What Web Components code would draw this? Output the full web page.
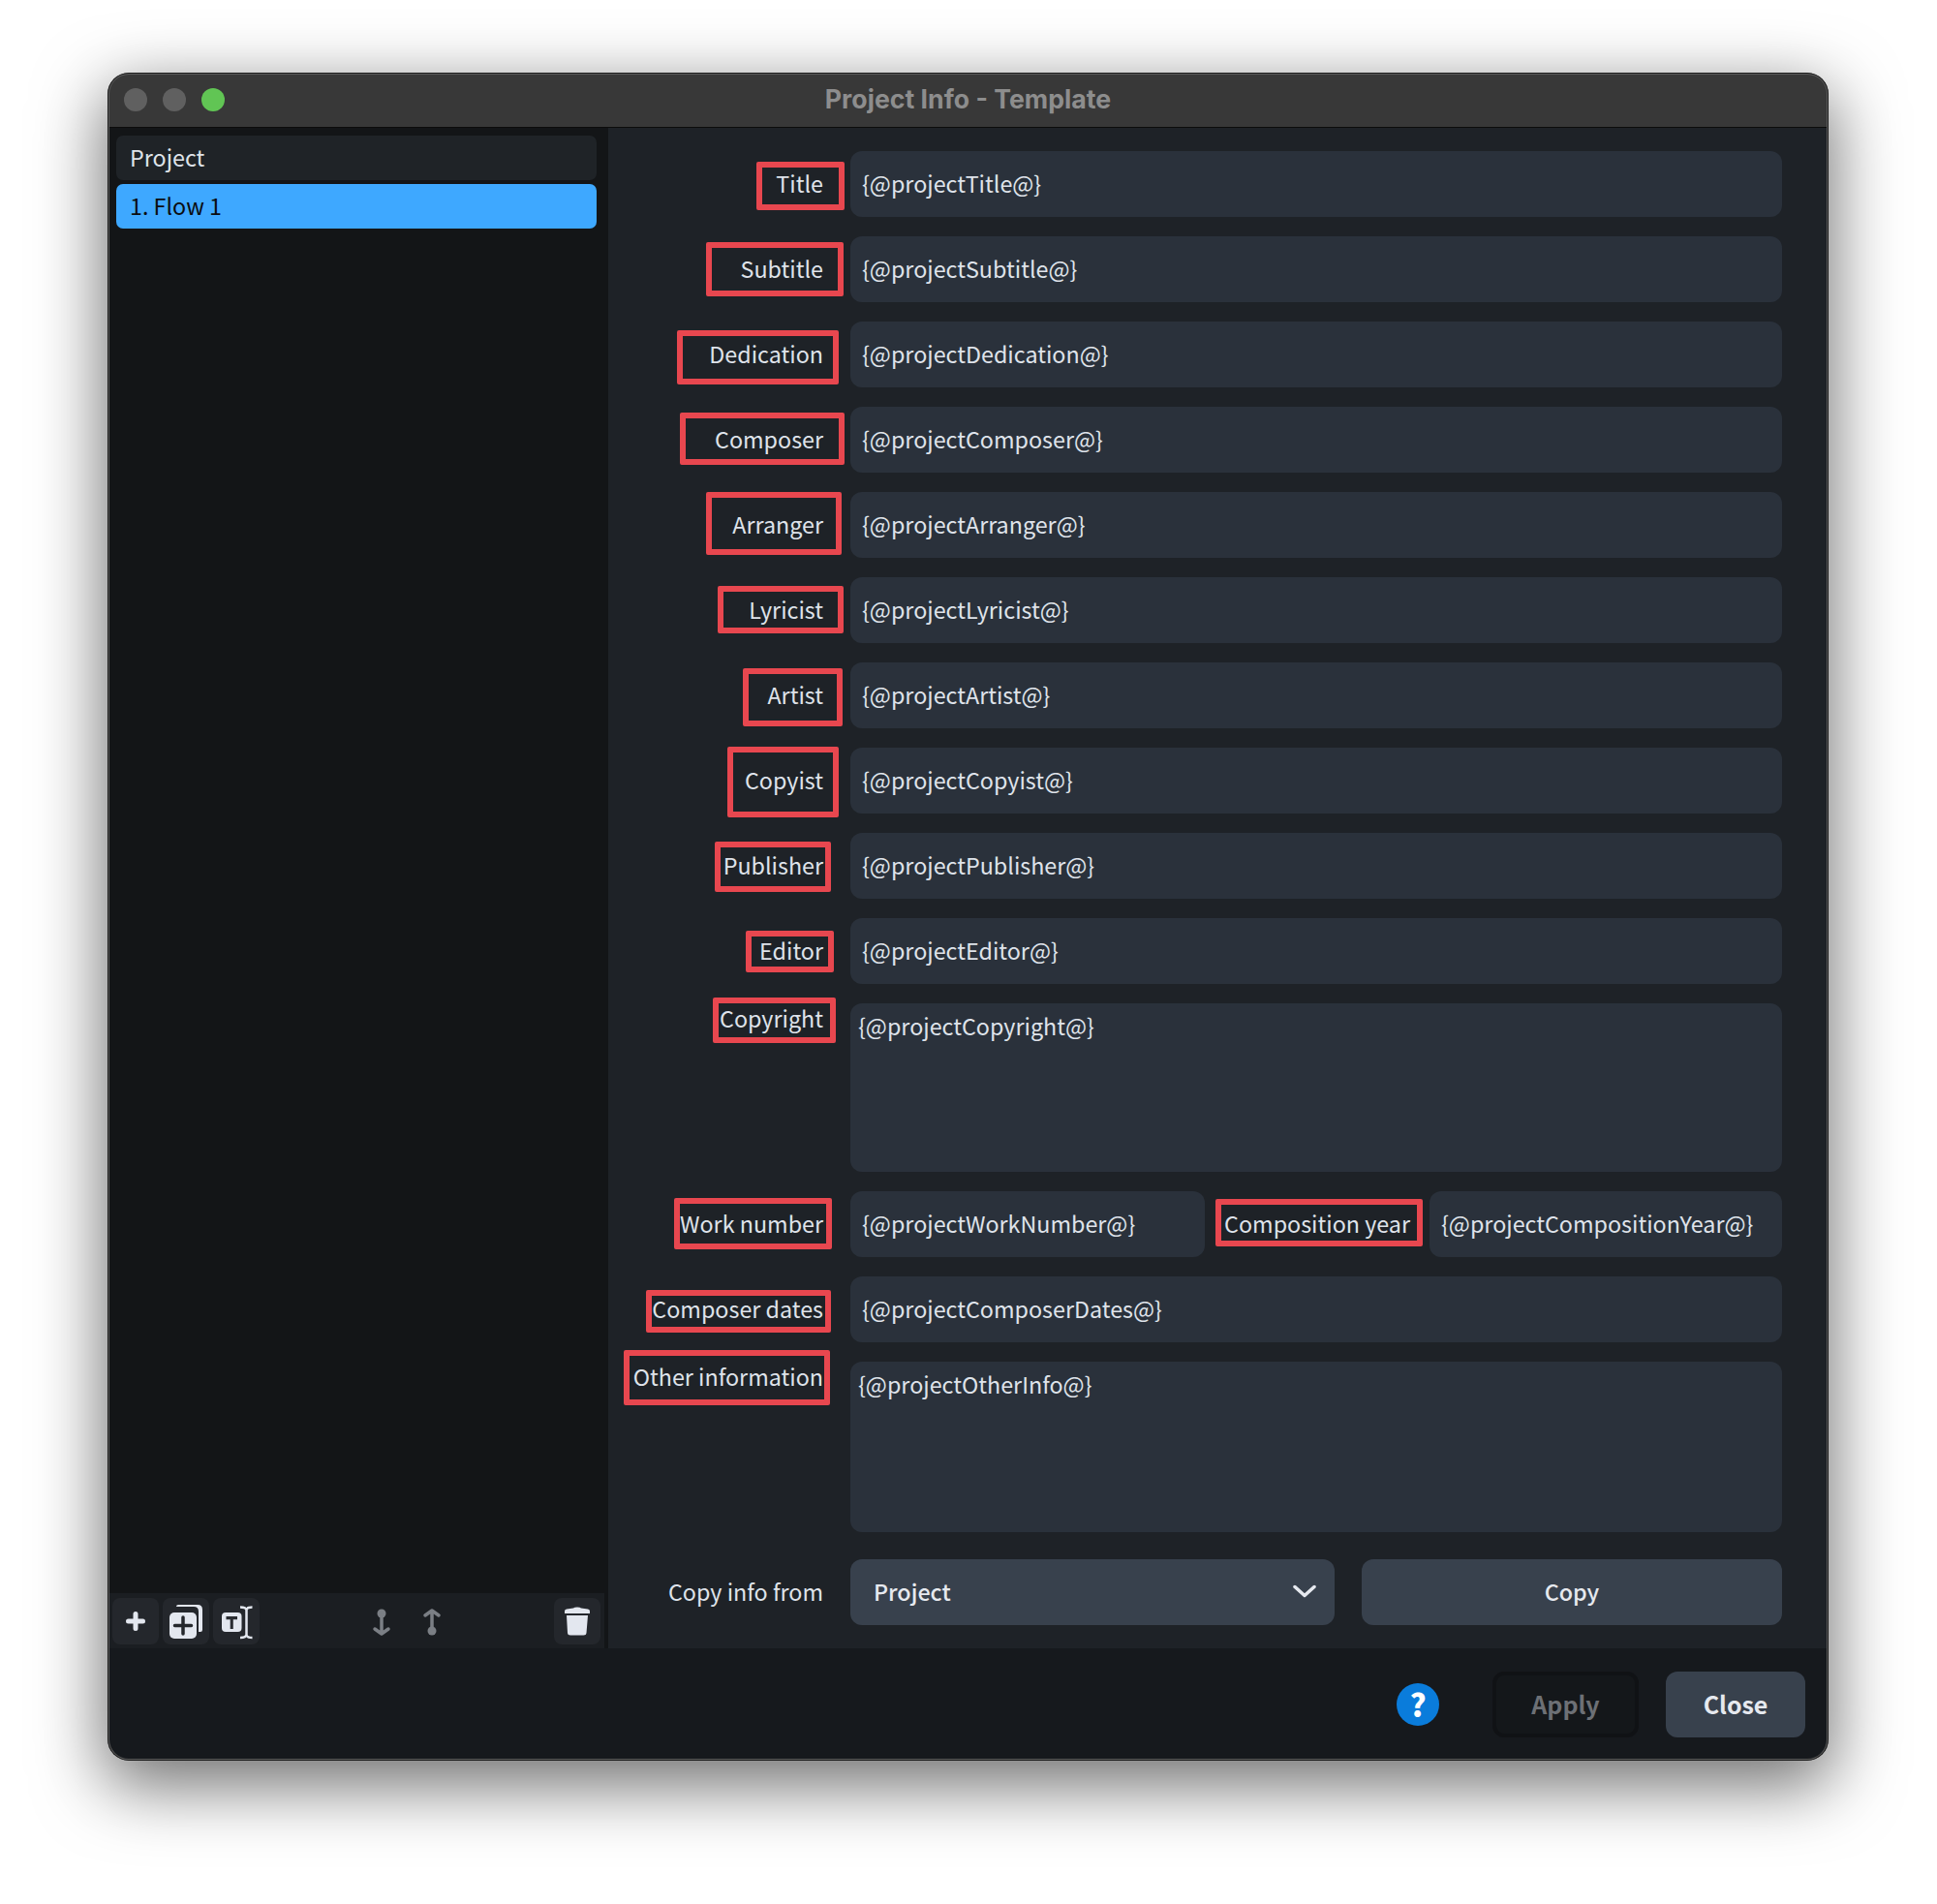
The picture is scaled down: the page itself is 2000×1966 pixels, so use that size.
<!DOCTYPE html>
<html lang="en">
<head>
<meta charset="utf-8">
<title>Project Info - Template</title>
<style>
  html, body { margin: 0; background: #fff; }
  body { font-family: "Noto Sans CJK JP", "Noto Sans", sans-serif; font-size: 23.3px; line-height: 34px; color: #dfe3ea; }
</style>
</head>
<body>
<project-info-page>
  <app-window heading="Project Info - Template">
    <flow-sidebar slot="side">
      <list-row>Project</list-row>
      <list-row selected>1. Flow 1</list-row>
    </flow-sidebar>

    <info-row label="Title" box="153 11 91 50"><text-field>{@projectTitle@}</text-field></info-row>
    <info-row label="Subtitle" box="101 6 142 56"><text-field>{@projectSubtitle@}</text-field></info-row>
    <info-row label="Dedication" box="71 9 167 56"><text-field>{@projectDedication@}</text-field></info-row>
    <info-row label="Composer" box="74 6 170 54"><text-field>{@projectComposer@}</text-field></info-row>
    <info-row label="Arranger" box="101 0 140 65"><text-field>{@projectArranger@}</text-field></info-row>
    <info-row label="Lyricist" box="113 9 130 49"><text-field>{@projectLyricist@}</text-field></info-row>
    <info-row label="Artist" box="139 6 103 60"><text-field>{@projectArtist@}</text-field></info-row>
    <info-row label="Copyist" box="123 -1 115 73"><text-field>{@projectCopyist@}</text-field></info-row>
    <info-row label="Publisher" box="110 9 120 52"><text-field>{@projectPublisher@}</text-field></info-row>
    <info-row label="Editor" box="142 13 91 43"><text-field>{@projectEditor@}</text-field></info-row>
    <info-row label="Copyright" box="108 -6 127 47" multiline><text-field multiline style="height:174px">{@projectCopyright@}</text-field></info-row>
    <info-row label="Work number" box="68 7 163 53">
      <text-field style="flex:none;width:366px">{@projectWorkNumber@}</text-field>
      <inline-label>Composition year</inline-label>
      <text-field style="flex:none;width:364px">{@projectCompositionYear@}</text-field>
      <red-box box="627 8 214 49"></red-box>
    </info-row>
    <info-row label="Composer dates" box="39 14 191 44"><text-field>{@projectComposerDates@}</text-field></info-row>
    <info-row label="Other information" box="16 -12 213 57" multiline><text-field multiline style="height:176px">{@projectOtherInfo@}</text-field></info-row>
    <info-row label="Copy info from" style="margin-top:8px">
      <drop-down>Project</drop-down>
      <push-button style="flex:none;width:434px;margin-left:28px">Copy</push-button>
    </info-row>

    <dialog-footer slot="footer"></dialog-footer>
  </app-window>
</project-info-page>

<script>
class ProjectInfoPage extends HTMLElement {
  connectedCallback() {
    this.attachShadow({ mode: 'open' });
    this.shadowRoot.innerHTML = `
      <style>
        :host { display: block; height: 1966px; padding: 75px 112px 0 111px; box-sizing: border-box; overflow: hidden; }
      </style>
      <slot></slot>
    `;
  }
}

class AppWindow extends HTMLElement {
  connectedCallback() {
    this.attachShadow({ mode: 'open' });
    this.shadowRoot.innerHTML = `
      <style>
        :host {
          display: flex;
          flex-direction: column;
          position: relative;
          height: 1743px;
          border-radius: 22px;
          overflow: hidden;
          box-shadow: 0 22px 70px 4px rgba(0, 0, 0, 0.56);
        }
        :host::after {
          content: '';
          position: absolute;
          inset: 0;
          border-radius: 22px;
          box-shadow: inset 0 0 0 1px #1a1a1a, inset 0 0 0 2px #5c5c5c;
          pointer-events: none;
        }
        .bar {
          flex: none;
          height: 56px;
          display: flex;
          align-items: center;
          position: relative;
          background: #383838;
          border-bottom: 1px solid #0c0c0c;
        }
        .lights { display: flex; gap: 16px; padding-left: 17px; }
        .lights i { width: 24px; height: 24px; border-radius: 50%; background: #606060; }
        .lights i:last-child { background: #61c554; }
        h1 {
          position: absolute;
          left: 0; right: 0; top: 0; bottom: 2px;
          margin: 0;
          display: flex;
          align-items: center;
          justify-content: center;
          font: 700 26.7px "Inter", "Liberation Sans", sans-serif;
          color: #8d8d8d;
        }
        .main { flex: 1; display: flex; min-height: 0; }
        .form {
          flex: 1;
          min-width: 0;
          background: #1e2227;
          padding: 24px 48px 24px 0;
          display: flex;
          flex-direction: column;
          gap: 20px;
        }
      </style>
      <div class="bar">
        <div class="lights"><i></i><i></i><i></i></div>
        <h1>${this.getAttribute('heading')}</h1>
      </div>
      <div class="main">
        <slot name="side"></slot>
        <div class="form"><slot></slot></div>
      </div>
      <slot name="footer"></slot>
    `;
  }
}

class FlowSidebar extends HTMLElement {
  connectedCallback() {
    this.attachShadow({ mode: 'open' });
    this.shadowRoot.innerHTML = `
      <style>
        :host {
          flex: none;
          width: 517px;
          display: flex;
          flex-direction: column;
          background: #131517;
        }
        .list { flex: 1; display: flex; flex-direction: column; gap: 4px; padding: 8px 12px 0 9px; }
        .tools {
          flex: none;
          height: 57px;
          margin-right: 4px;
          padding: 5px 4px 4px 5px;
          box-sizing: border-box;
          background: #1b1e22;
          display: flex;
          gap: 4px;
        }
        .btn { width: 48px; height: 48px; border-radius: 8px; background: #24272c; flex: none; }
        .btn svg, .ghost svg { display: block; }
        .ghost { width: 48px; height: 48px; flex: none; }
        .a1 { margin-left: 98px; }
        .last { margin-left: auto; }
      </style>
      <div class="list"><slot></slot></div>
      <div class="tools">
        <div class="btn">
          <svg width="48" height="48" viewBox="0 0 48 48"><path d="M16.500 24h15M24 16.500v15" stroke="#e3e7ef" stroke-width="5" stroke-linecap="round"/></svg>
        </div>
        <div class="btn">
          <svg width="48" height="48" viewBox="0 0 48 48">
            <path d="M14 9q0-2 2-2h20q5 0 5 5v21q0 2-2 2h-2V14q0-5-5-5z" fill="#e3e7ef"/>
            <rect x="7" y="15" width="28" height="27" rx="5" fill="#e3e7ef"/>
            <path d="M12.500 28.500h17M21 20v17" stroke="#24272c" stroke-width="3.500" stroke-linecap="round"/>
          </svg>
        </div>
        <div class="btn">
          <svg width="48" height="48" viewBox="0 0 48 48">
            <rect x="9" y="15" width="20.500" height="20" rx="4" fill="#e3e7ef"/>
            <path d="M13.500 19h11.500v3.200h-4.200V32h-3.100v-9.800h-4.200z" fill="#2a2d32"/>
            <path d="M28 9.500q6 0 6.500 3V38q-.5 3-6.500 3M40.500 9.500q-6 0-6 3M40.500 41q-6 0-6-3" fill="none" stroke="#e3e7ef" stroke-width="2.500"/>
          </svg>
        </div>
        <div class="ghost a1">
          <svg width="48" height="48" viewBox="0 0 48 48">
            <circle cx="24" cy="16" r="4.500" fill="#7b7f85"/>
            <path d="M24 18v18M17 32l7 5 7-5" fill="none" stroke="#7b7f85" stroke-width="3.500" stroke-linecap="round" stroke-linejoin="round"/>
          </svg>
        </div>
        <div class="ghost">
          <svg width="48" height="48" viewBox="0 0 48 48">
            <circle cx="24" cy="34" r="4.500" fill="#7b7f85"/>
            <path d="M24 32V14M17 18l7-5 7 5" fill="none" stroke="#7b7f85" stroke-width="3.500" stroke-linecap="round" stroke-linejoin="round"/>
          </svg>
        </div>
        <div class="btn last">
          <svg width="48" height="48" viewBox="0 0 48 48">
            <path d="M11 13.500q0-1.500 2-2l7-1q1-1 4-1t4 1l7 1q2 .5 2 2V16H11z" fill="#e3e7ef"/>
            <path d="M13 18h22l-1.500 18q-.2 2.500-3 2.500h-13.500q-2.800 0-3-2.500z" fill="#e3e7ef"/>
          </svg>
        </div>
      </div>
    `;
  }
}

class ListRow extends HTMLElement {
  connectedCallback() {
    this.attachShadow({ mode: 'open' });
    this.shadowRoot.innerHTML = `
      <style>
        :host {
          display: flex;
          align-items: center;
          height: 46px;
          padding: 0 0 2px 14px;
          box-sizing: border-box;
          border-radius: 7px;
          background: #1f2327;
          color: #dfe3ea;
        }
        :host([selected]) { background: #3ea8ff; color: #0b0d10; }
      </style>
      <slot></slot>
    `;
  }
}

class RedBox extends HTMLElement {
  connectedCallback() {
    const [x, y, w, h] = this.getAttribute('box').split(' ');
    this.attachShadow({ mode: 'open' });
    this.shadowRoot.innerHTML = `
      <style>
        :host {
          position: absolute;
          left: ${x}px; top: ${y}px; width: ${w}px; height: ${h}px;
          box-sizing: border-box;
          border: 6px solid #e8474f;
          border-radius: 2px;
          pointer-events: none;
        }
      </style>
    `;
  }
}

class InfoRow extends HTMLElement {
  connectedCallback() {
    const box = this.getAttribute('box');
    this.attachShadow({ mode: 'open' });
    this.shadowRoot.innerHTML = `
      <style>
        :host { display: flex; position: relative; flex: none; }
        .label {
          flex: none;
          width: 250px;
          box-sizing: border-box;
          padding: 16px 28px 0 0;
          text-align: right;
          white-space: nowrap;
          color: #dfe3ea;
        }
        :host([multiline]) .label { padding-top: 0; margin-top: -2px; }
        .cells { flex: 1; display: flex; min-width: 0; }
      </style>
      <div class="label">${this.getAttribute('label')}</div>
      <div class="cells"><slot></slot></div>
      ${box ? `<red-box box="${box}"></red-box>` : ''}
    `;
  }
}

class TextField extends HTMLElement {
  connectedCallback() {
    this.attachShadow({ mode: 'open' });
    this.shadowRoot.innerHTML = `
      <style>
        :host {
          flex: 1;
          display: block;
          min-width: 0;
          height: 68px;
          box-sizing: border-box;
          padding: 16px 12px 0;
          border-radius: 12px;
          background: #2a313b;
          color: #dfe3ea;
          white-space: nowrap;
        }
        :host([multiline]) { padding: 6px 8px 0; }
      </style>
      <slot></slot>
    `;
  }
}

class InlineLabel extends HTMLElement {
  connectedCallback() {
    this.attachShadow({ mode: 'open' });
    this.shadowRoot.innerHTML = `
      <style>
        :host {
          flex: 1;
          padding: 16px 20px 0 0;
          text-align: right;
          white-space: nowrap;
          color: #dfe3ea;
        }
      </style>
      <slot></slot>
    `;
  }
}

class DropDown extends HTMLElement {
  connectedCallback() {
    this.attachShadow({ mode: 'open' });
    this.shadowRoot.innerHTML = `
      <style>
        :host {
          flex: 1;
          height: 68px;
          display: flex;
          align-items: center;
          justify-content: space-between;
          box-sizing: border-box;
          padding: 0 19px 2px 24px;
          border-radius: 12px;
          background: #38414d;
          color: #e6e9ef;
          font-weight: 500;
        }
        svg { display: block; }
      </style>
      <span><slot></slot></span>
      <svg width="24" height="14" viewBox="0 0 24 14"><path d="M2 2.500l10 9 10-9" fill="none" stroke="#e6e9ef" stroke-width="3.500" stroke-linecap="round" stroke-linejoin="round"/></svg>
    `;
  }
}

class PushButton extends HTMLElement {
  connectedCallback() {
    this.attachShadow({ mode: 'open' });
    this.shadowRoot.innerHTML = `
      <style>
        :host {
          height: 68px;
          display: flex;
          align-items: center;
          justify-content: center;
          box-sizing: border-box;
          padding-bottom: 3px;
          border-radius: 12px;
          background: #38414d;
          color: #e6e9ef;
          font-weight: 500;
        }
        :host([disabled]) { background: #14171a; border: 4px solid #101215; color: #6d7075; }
      </style>
      <slot></slot>
    `;
  }
}

class DialogFooter extends HTMLElement {
  connectedCallback() {
    this.attachShadow({ mode: 'open' });
    this.shadowRoot.innerHTML = `
      <style>
        :host {
          flex: none;
          height: 116px;
          display: flex;
          align-items: center;
          justify-content: flex-end;
          padding-right: 24px;
          background: #16191d;
        }
        .help {
          width: 44px;
          height: 44px;
          border-radius: 50%;
          background: #0a7cdb;
          color: #fff;
          font: 900 32px/42px "Noto Sans CJK JP", sans-serif;
          text-align: center;
          margin-right: 55px;
        }
        push-button { font-size: 25px; font-weight: 700; }
        .apply { width: 151px; margin-right: 28px; }
        .close { width: 144px; }
      </style>
      <div class="help">?</div>
      <push-button class="apply" disabled>Apply</push-button>
      <push-button class="close">Close</push-button>
    `;
  }
}

customElements.define('project-info-page', ProjectInfoPage);
customElements.define('app-window', AppWindow);
customElements.define('flow-sidebar', FlowSidebar);
customElements.define('list-row', ListRow);
customElements.define('red-box', RedBox);
customElements.define('info-row', InfoRow);
customElements.define('text-field', TextField);
customElements.define('inline-label', InlineLabel);
customElements.define('drop-down', DropDown);
customElements.define('push-button', PushButton);
customElements.define('dialog-footer', DialogFooter);
</script>
</body>
</html>
